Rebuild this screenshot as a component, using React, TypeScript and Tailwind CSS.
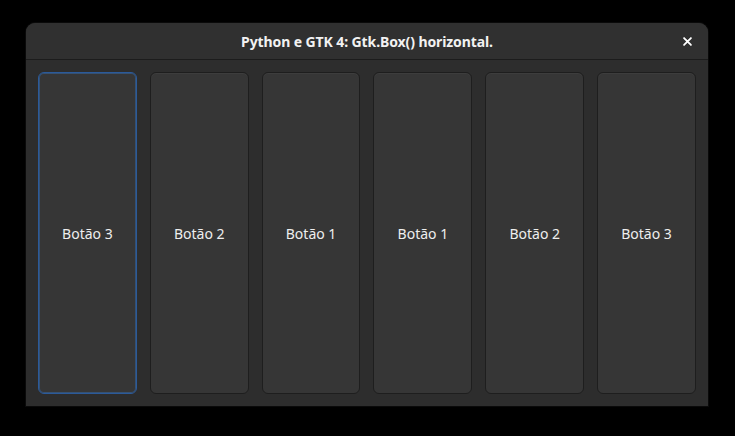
const LABELS = ["Botão 3", "Botão 2", "Botão 1", "Botão 1", "Botão 2", "Botão 3"]

export default function App() {
  return (
    <div className="w-[735px] h-[436px] bg-black pt-[23px] pl-[26px] font-['Noto_Sans',sans-serif]">
      <div className="w-[682px] h-[383px] flex flex-col rounded-t-[9px] overflow-hidden bg-[#2d2d2d] shadow-[0_0_0_1px_rgba(255,255,255,0.04)]">
        {/* header bar */}
        <div className="h-[37px] shrink-0 flex items-center justify-center relative bg-[#303030] border-b border-[#1c1c1c]">
          <span className="text-[14px] font-bold text-[#f2f2f2] tracking-[-0.1px]">
            Python e GTK 4: Gtk.Box() horizontal.
          </span>
          <button className="absolute right-[12px] top-[9px] w-[18px] h-[18px] flex items-center justify-center text-white">
            <svg viewBox="0 0 16 16" className="w-[11px] h-[11px]" fill="none" stroke="currentColor" strokeWidth="2.6" strokeLinecap="round">
              <path d="M3 3l10 10M13 3L3 13" />
            </svg>
          </button>
        </div>

        {/* buttons */}
        <div className="flex-1 flex gap-[13px] p-[12px]">
          {LABELS.map((label, i) => (
            <button
              key={i}
              className={`flex-1 flex items-center justify-center rounded-[6px] bg-[#363636] text-[14px] text-[#eeeeee] border ${
                i === 0
                  ? "border-[#2b5a9a] shadow-[inset_0_0_0_1px_rgba(53,132,228,0.35)]"
                  : "border-[#1e1e1e] shadow-[inset_0_1px_0_rgba(255,255,255,0.04)]"
              }`}
            >
              {label}
            </button>
          ))}
        </div>
      </div>
    </div>
  )
}
